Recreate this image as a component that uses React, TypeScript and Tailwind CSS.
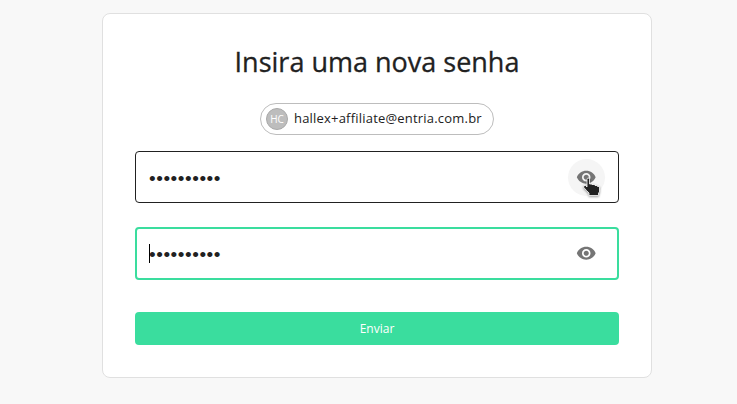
import React from "react";

function EyeIcon() {
  return (
    <svg viewBox="0 0 24 24" className="h-[20.5px] w-[20.5px] fill-[#757575]" aria-hidden="true">
      <path d="M12 4.5C7 4.5 2.73 7.61 1 12c1.73 4.39 6 7.5 11 7.5s9.27-3.11 11-7.5c-1.73-4.39-6-7.5-11-7.5zM12 17c-2.76 0-5-2.24-5-5s2.24-5 5-5 5 2.24 5 5-2.24 5-5 5zm0-8c-1.66 0-3 1.34-3 3s1.34 3 3 3 3-1.34 3-3-1.34-3-3-3z" />
    </svg>
  );
}

function HandCursor() {
  return (
    <svg
      viewBox="0 0 18 20"
      className="pointer-events-none absolute left-[15px] top-[18px] h-[20px] w-[18px] drop-shadow-[0_1px_1px_rgba(0,0,0,0.4)]"
      aria-hidden="true"
    >
      <path
        d="M4 2.5Q4 1 5.2 1T6.5 2.5V7H9V7.5H12V8.5H14.5V9.5H16.5V15L15.5 16V18.5H6V16L3.5 13.5L.8 10.5V8.5H2.5L4 10Z"
        className="fill-[#222] stroke-white"
        strokeWidth="0.8"
        strokeLinejoin="round"
      />
    </svg>
  );
}

function PasswordField({ active = false }: { active?: boolean }) {
  return (
    <div
      className={
        active
          ? "relative flex h-[53px] items-center rounded-[4px] border-2 border-[#3add9e] pl-[12px] pr-[12px]"
          : "relative flex h-[52px] items-center rounded-[4px] border border-[#212121] pl-[13px] pr-[13px]"
      }
    >
      {active && <span className="absolute left-[12px] top-[15px] h-[19px] w-px bg-black" />}
      <input
        type="password"
        defaultValue="abcdefghij"
        className={
          active
            ? "h-7 min-w-0 flex-1 bg-transparent pt-[3px] font-['Liberation_Sans',sans-serif] text-[19px] tracking-[0.55px] text-[#212121] outline-none"
            : "h-7 min-w-0 flex-1 bg-transparent pt-[5px] font-['Liberation_Sans',sans-serif] text-[19px] tracking-[0.55px] text-[#212121] outline-none"
        }
      />
      <button
        type="button"
        className={
          active
            ? "relative flex h-[37px] w-[37px] items-center justify-center rounded-full"
            : "relative flex h-[37px] w-[37px] items-center justify-center rounded-full bg-[#f5f5f5]"
        }
      >
        <EyeIcon />
        {!active && <HandCursor />}
      </button>
    </div>
  );
}

export default function App() {
  return (
    <main className="flex h-[404px] w-[737px] items-start bg-[#f8f8f8] pl-[102px] pt-[13px] font-['Open_Sans',sans-serif] text-[#212121]">
      <section className="flex h-[365px] w-[550px] flex-col rounded-[8px] border border-[#e0e0e0] bg-white px-8">
        <h1 className="mt-[28px] h-10 whitespace-nowrap text-center text-[27px] font-medium leading-10 [-webkit-text-stroke:0.3px_#212121]">
          Insira uma nova senha
        </h1>
        <div className="mt-[21px] flex h-8 w-[234px] items-center self-center rounded-full border border-[#bdbdbd] pl-[5px]">
          <span className="flex h-[22px] w-[22px] items-center justify-center rounded-full border border-[#a9a9a9] bg-[#bdbdbd] text-[10px] text-white">
            HC
          </span>
          <span className="ml-[6px] whitespace-nowrap text-[13px] tracking-[0.2px]">hallex+affiliate@entria.com.br</span>
        </div>
        <form className="mt-4 flex flex-col">
          <PasswordField />
          <div className="mt-6">
            <PasswordField active />
          </div>
          <button type="button" className="mt-8 h-[33px] rounded-[4px] bg-[#3add9e] text-[12px] text-white">
            Enviar
          </button>
        </form>
      </section>
    </main>
  );
}
